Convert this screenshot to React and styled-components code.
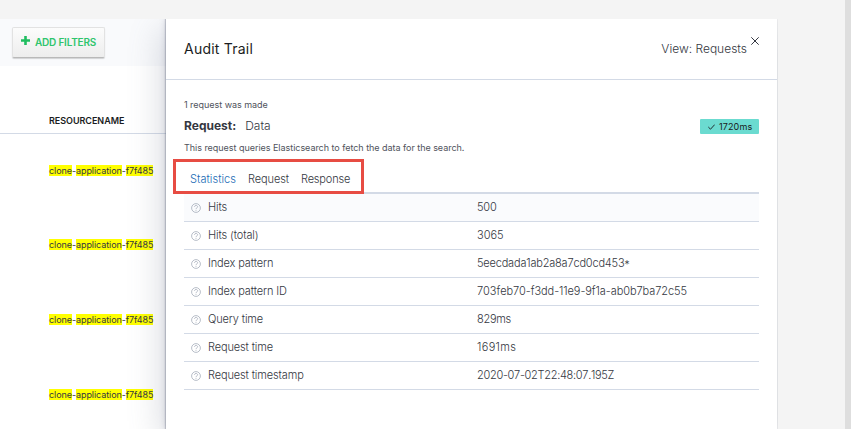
import React from "react";
import styled, { createGlobalStyle } from "styled-components";

const GlobalStyle = createGlobalStyle`
  *, *::before, *::after { box-sizing: border-box; }
  body {
    margin: 0;
    background: #f4f4f4;
    color: #343741;
    font-family: Inter, "Noto Sans", sans-serif;
  }
`;

const Screen = styled.div`
  display: flex;
  width: 851px;
  height: 429px;
  padding-top: 19px;
  overflow: hidden;
  border-right: 6px solid #dedede;
`;

const Discover = styled.section`
  flex: 0 0 166px;
  background: #fff;
`;

const FilterBar = styled.div`
  height: 47px;
  padding: 8px 12px;
  background: #f9fafc;
`;

const AddButton = styled.button`
  display: flex;
  align-items: center;
  gap: 5px;
  width: 93px;
  height: 31px;
  padding: 0 0 1px 8px;
  border: 1px solid #e2e2e2;
  border-bottom: 1px solid #b9b9b9;
  border-radius: 2px;
  background: linear-gradient(#fcfcfc, #ededed);
  box-shadow: 0 1px 1px rgba(0, 0, 0, 0.16);
  color: #2fc56d;
  font: 600 10px/14px Inter, sans-serif;
  letter-spacing: -0.2px;
  white-space: nowrap;

  svg { flex: none; margin-top: -3px; }
`;

const ColumnHead = styled.div`
  height: 68px;
  padding: 48px 0 0 49px;
  border-bottom: 1px solid #d3dae6;
  color: #1a1c21;
  font-size: 9px;
  font-weight: 600;
  line-height: 14px;
  letter-spacing: -0.04px;
`;

const Resources = styled.div`
  display: grid;
  grid-auto-rows: 74.7px;
`;

const Resource = styled.div`
  padding: 30.7px 0 0 49px;
  font-size: 9px;
  line-height: 11px;
  letter-spacing: -0.075px;
  white-space: nowrap;
`;

const Mark = styled.mark`
  display: inline-block;
  height: 11px;
  background: #ff0;
  color: #343741;
`;

const Flyout = styled.aside`
  flex: 0 0 611px;
  position: relative;
  background: #fff;
  box-shadow: -1px 0 1px rgba(90, 95, 115, 0.3), -1px 0 6px rgba(105, 112, 135, 0.2), -6px 10px 30px rgba(105, 112, 135, 0.24);
  clip-path: inset(0 -1px 0 -60px);
`;

const FlyoutHeader = styled.header`
  display: flex;
  justify-content: space-between;
  height: 61px;
  padding: 20px 18px 0;
  border-bottom: 1px solid #d3dae6;
`;

const Title = styled.h1`
  margin: 0;
  color: #1a1c21;
  font-size: 14px;
  font-weight: 400;
  line-height: 20px;
  letter-spacing: 0.22px;
`;

const HeaderActions = styled.div`
  display: flex;
  align-items: flex-start;
  gap: 4px;
`;

const ViewPicker = styled.span`
  font-size: 12px;
  font-weight: 300;
  line-height: 20px;
`;

const CloseIcon = styled.svg`
  margin-top: -2px;
`;

const FlyoutBody = styled.div`
  padding: 18px 18px 0;
`;

const Note = styled.p`
  margin: 0;
  color: #50535c;
  font-size: 9px;
  line-height: 14px;
  letter-spacing: -0.035px;
`;

const RequestRow = styled.div`
  display: flex;
  align-items: center;
  justify-content: space-between;
  height: 29px;
`;

const RequestName = styled.div`
  display: flex;
  gap: 9px;
  margin-top: -2px;
  font-size: 12px;
  font-weight: 300;
  line-height: 18px;

  strong { font-weight: 700; color: #343741; }
`;

const Badge = styled.span`
  display: flex;
  align-items: center;
  gap: 4px;
  width: 59px;
  height: 15px;
  padding-left: 8px;
  border-radius: 1px;
  background: #6bdbd0;
  color: #1a1c21;
  font-size: 9px;
  letter-spacing: 0.12px;
`;

const Tabs = styled.nav`
  display: flex;
  gap: 12px;
  height: 39px;
  padding: 16px 6px 0;
  border-bottom: 2px solid #d3dae6;
`;

const Tab = styled.span`
  color: ${(p) => (p.$active ? "#1a6bb5" : "#343741")};
  font-size: 11px;
  font-weight: 300;
  line-height: 17px;
  letter-spacing: ${(p) => p.$spacing || 0};
`;

const StatRow = styled.div`
  display: grid;
  grid-template-columns: 24px 269px 1fr;
  align-items: center;
  height: 28px;
  padding-bottom: 1px;
  border-bottom: 1px solid #d3dae6;
  background: ${(p) => (p.$hover ? "#fafbfd" : "transparent")};
  font-size: 11px;
  font-weight: 300;
  letter-spacing: -0.13px;
`;

const HelpIcon = styled.svg`
  margin: 2px 0 0 7px;
`;

const Value = styled.span`
  font-kerning: none;
  letter-spacing: ${(p) => p.$spacing || 0};
`;

const Wildcard = styled.span`
  display: inline-block;
  line-height: 1;
  transform: translateY(2px);
`;

const TabsOutline = styled.div`
  position: absolute;
  top: 140px;
  left: 7px;
  width: 191px;
  height: 35px;
  border: 3px solid #e74c43;
`;

const STATS = [
  { label: "Hits", value: "500", spacing: "-0.2px" },
  { label: "Hits (total)", value: "3065" },
  { label: "Index pattern", value: "5eecdada1ab2a8a7cd0cd453", wildcard: true, spacing: "-0.19px" },
  { label: "Index pattern ID", value: "703feb70-f3dd-11e9-9f1a-ab0b7ba72c55", spacing: "-0.07px" },
  { label: "Query time", value: "829ms", spacing: "-0.3px" },
  { label: "Request time", value: "1691ms", spacing: "0.35px" },
  { label: "Request timestamp", value: "2020-07-02T22:48:07.195Z", spacing: "-0.3px" },
];

const Help = () => (
  <HelpIcon width="10" height="10" viewBox="0 0 10 10" fill="none" stroke="#a0a8b6" strokeWidth="0.75">
    <circle cx="5" cy="5" r="4.4" />
    <path d="M3.5 3.9C3.5 1.9 6.6 2 6.6 3.8C6.6 4.9 5 4.8 5 6.1M5 6.9V7.8" />
  </HelpIcon>
);

export default function App() {
  return (
    <>
      <GlobalStyle />
      <Screen>
        <Discover>
          <FilterBar>
            <AddButton>
              <svg width="9" height="9" viewBox="0 0 9 9" fill="#20bd60">
                <path d="M3.2 0H5.8V3.2H9V5.8H5.8V9H3.2V5.8H0V3.2H3.2Z" />
              </svg>
              ADD FILTERS
            </AddButton>
          </FilterBar>
          <ColumnHead>RESOURCENAME</ColumnHead>
          <Resources>
            {[0, 1, 2, 3].map((n) => (
              <Resource key={n}>
                <Mark>clone</Mark>-<Mark>application</Mark>-<Mark>f7f485</Mark>
              </Resource>
            ))}
          </Resources>
        </Discover>
        <Flyout>
          <FlyoutHeader>
            <Title>Audit Trail</Title>
            <HeaderActions>
              <ViewPicker>View: Requests</ViewPicker>
              <CloseIcon width="8" height="8" viewBox="0 0 8 8" stroke="#343741" strokeWidth="1">
                <path d="M0.3 0.3L7.7 7.7M7.7 0.3L0.3 7.7" />
              </CloseIcon>
            </HeaderActions>
          </FlyoutHeader>
          <FlyoutBody>
            <Note>1 request was made</Note>
            <RequestRow>
              <RequestName>
                <strong>Request:</strong>
                <span>Data</span>
              </RequestName>
              <Badge>
                <svg width="7" height="6" viewBox="0 0 7 6" fill="none" stroke="#1a1c21" strokeWidth="0.9">
                  <path d="M0.3 3L2.5 5.2L6.7 0.6" />
                </svg>
                1720ms
              </Badge>
            </RequestRow>
            <Note>This request queries Elasticsearch to fetch the data for the search.</Note>
            <Tabs>
              <Tab $active $spacing="0.05px">Statistics</Tab>
              <Tab $spacing="-0.1px">Request</Tab>
              <Tab $spacing="-0.18px">Response</Tab>
            </Tabs>
            {STATS.map(({ label, value, wildcard, spacing }, i) => (
              <StatRow key={label} $hover={i === 0}>
                <Help />
                <span>{label}</span>
                <Value $spacing={spacing}>
                  {value}
                  {wildcard && <Wildcard>*</Wildcard>}
                </Value>
              </StatRow>
            ))}
          </FlyoutBody>
          <TabsOutline />
        </Flyout>
      </Screen>
    </>
  );
}
